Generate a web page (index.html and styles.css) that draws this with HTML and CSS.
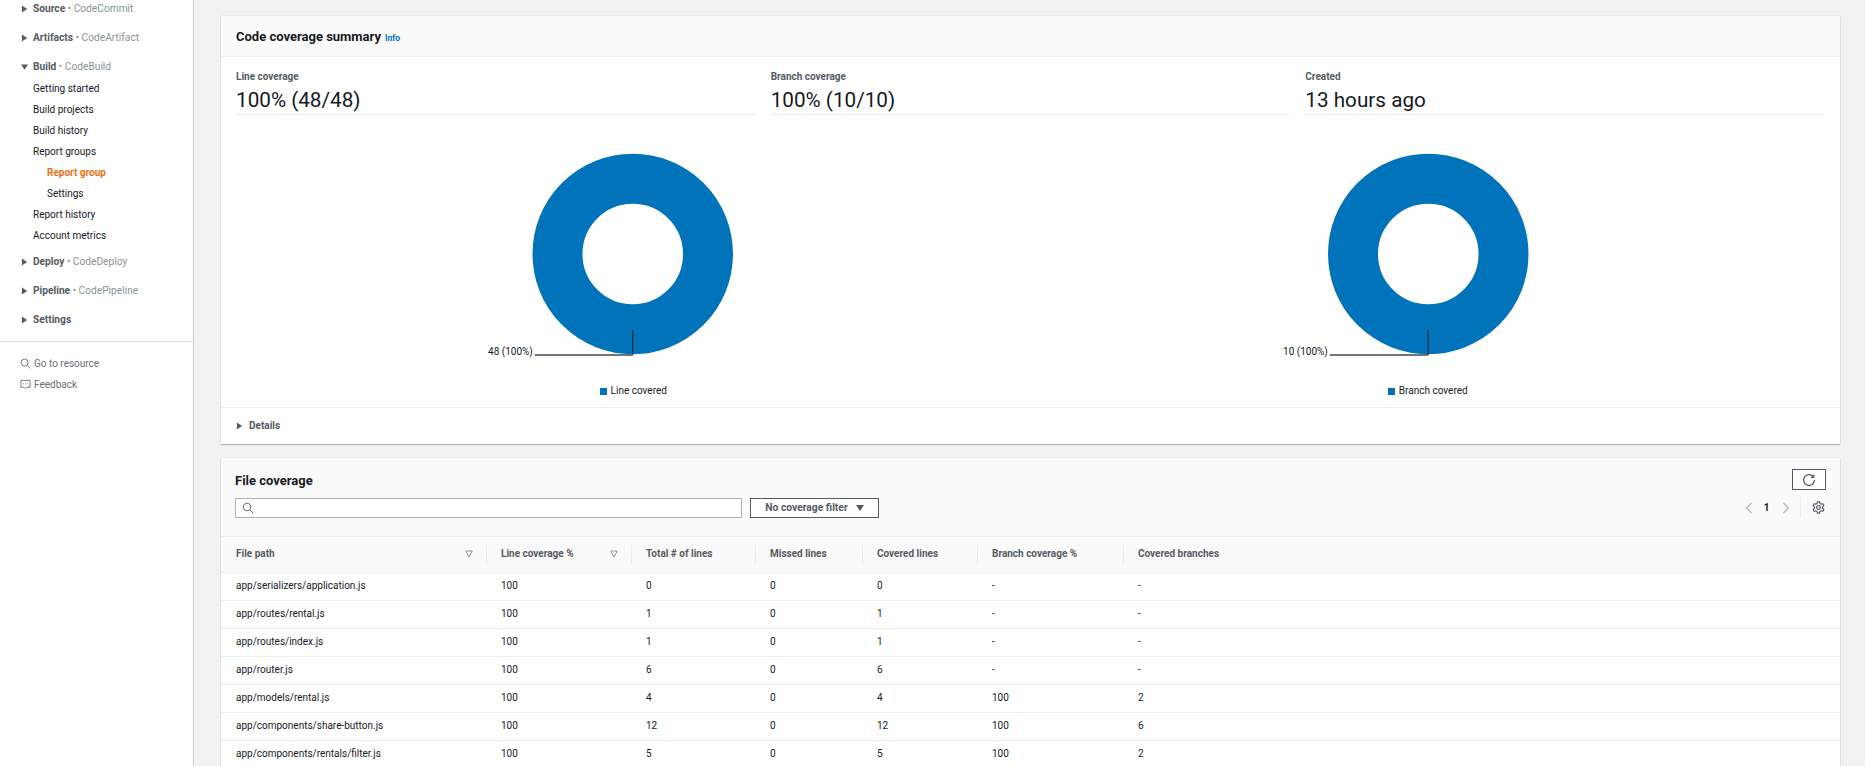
FILE: index.html
```html
<!DOCTYPE html>
<html lang="en">
<head>
<meta charset="utf-8">
<title>Code coverage</title>
<link rel="stylesheet" href="styles.css">
</head>
<body>
<div class="app">
  <nav class="sidebar">
    <div class="sec"><svg class="tri" viewBox="0 0 8 8"><path d="M1 0l6 4-6 4z"/></svg><b>Source</b><span class="svc"> • CodeCommit</span></div>
    <div class="sec"><svg class="tri" viewBox="0 0 8 8"><path d="M1 0l6 4-6 4z"/></svg><b>Artifacts</b><span class="svc"> • CodeArtifact</span></div>
    <div class="sec"><svg class="tri" viewBox="0 0 8 8"><path d="M0 1h8L4 7z"/></svg><b>Build</b><span class="svc"> • CodeBuild</span></div>
    <ul class="nav">
      <li>Getting started</li>
      <li>Build projects</li>
      <li>Build history</li>
      <li>Report groups</li>
      <li class="sub active">Report group</li>
      <li class="sub">Settings</li>
      <li>Report history</li>
      <li>Account metrics</li>
    </ul>
    <div class="sec"><svg class="tri" viewBox="0 0 8 8"><path d="M1 0l6 4-6 4z"/></svg><b>Deploy</b><span class="svc"> • CodeDeploy</span></div>
    <div class="sec"><svg class="tri" viewBox="0 0 8 8"><path d="M1 0l6 4-6 4z"/></svg><b>Pipeline</b><span class="svc"> • CodePipeline</span></div>
    <div class="sec"><svg class="tri" viewBox="0 0 8 8"><path d="M1 0l6 4-6 4z"/></svg><b>Settings</b></div>
    <hr class="rule">
    <ul class="tools">
      <li><svg class="ti" viewBox="0 0 12 12"><circle cx="5" cy="5" r="3.800"/><path d="M8 8l3.400 3.400"/></svg>Go to resource</li>
      <li><svg class="ti" viewBox="0 0 12 12"><path d="M1 1.500h10v7.500H7.500L6 10.500 4.500 9H1z"/><path d="M3.500 5.200h.8M5.600 5.200h.8M7.700 5.200h.8"/></svg>Feedback</li>
    </ul>
  </nav>
  <main class="main">
    <section class="panel summary">
      <header class="phead"><h2>Code coverage summary</h2><a class="info">Info</a></header>
      <div class="kvs">
        <div class="kv"><div class="k">Line coverage</div><div class="v">100% (48/48)</div></div>
        <div class="kv"><div class="k">Branch coverage</div><div class="v">100% (10/10)</div></div>
        <div class="kv"><div class="k">Created</div><div class="v">13 hours ago</div></div>
      </div>
      <div class="charts">
        <figure class="chart">
          <svg class="donut" viewBox="0 0 795 258">
            <circle class="ring" cx="397" cy="139" r="75.300"/>
            <path class="lead-v" d="M397 215V240"/>
            <path class="lead-h" d="M397 240H299"/>
            <text class="lbl" x="297" y="240" text-anchor="end">48 (100%)</text>
          </svg>
          <figcaption class="legend"><i class="sw"></i>Line covered</figcaption>
        </figure>
        <figure class="chart">
          <svg class="donut" viewBox="0 0 795 258">
            <circle class="ring" cx="397.500" cy="139" r="75.300"/>
            <path class="lead-v" d="M397.500 215V240"/>
            <path class="lead-h" d="M397.500 240H299"/>
            <text class="lbl" x="297" y="240" text-anchor="end">10 (100%)</text>
          </svg>
          <figcaption class="legend"><i class="sw"></i>Branch covered</figcaption>
        </figure>
      </div>
      <div class="details"><svg class="tri" viewBox="0 0 8 8"><path d="M1 0l6 4-6 4z"/></svg>Details</div>
    </section>
    <section class="panel files">
      <header class="fhead">
        <div class="ftop">
          <h2>File coverage</h2>
          <button class="refresh" aria-label="Refresh"><svg viewBox="0 0 14 14"><path d="M11.600 4.200A5.400 5.400 0 1 0 12.400 7"/><path class="fillp" d="M12.400 1v4H8.400z"/></svg></button>
        </div>
        <div class="fbar">
          <label class="search"><svg viewBox="0 0 12 12"><circle cx="5" cy="5" r="3.800"/><path d="M8 8l3.400 3.400"/></svg></label>
          <button class="filter">No coverage filter<svg viewBox="0 0 8 8"><path d="M0 1h8L4 7z"/></svg></button>
          <div class="pager">
            <svg class="chev" viewBox="0 0 8 12"><path d="M6.500 1L1.500 6l5 5"/></svg>
            <span class="pg">1</span>
            <svg class="chev" viewBox="0 0 8 12"><path d="M1.500 1l5 5-5 5"/></svg>
            <span class="vsep"></span>
            <svg class="gear" viewBox="0 0 14 14"><path d="M5.800 1h2.400l.4 1.800 1.200.7 1.800-.6 1.200 2.100-1.400 1.200v1.600l1.400 1.200-1.200 2.100-1.800-.6-1.200.7-.4 1.800H5.800l-.4-1.800-1.200-.7-1.800.6-1.200-2.100 1.400-1.200V6.200L1.200 5l1.200-2.100 1.800.6 1.200-.7z"/><circle cx="7" cy="7" r="2"/></svg>
          </div>
        </div>
      </header>
      <table class="tbl">
        <colgroup><col class="c1"><col class="c2"><col class="c3"><col class="c4"><col class="c5"><col class="c6"><col></colgroup>
        <thead>
          <tr>
            <th>File path<svg class="sort" viewBox="0 0 8 8"><path d="M.8 1h6.400L4 7z"/></svg></th>
            <th>Line coverage %<svg class="sort" viewBox="0 0 8 8"><path d="M.8 1h6.400L4 7z"/></svg></th>
            <th>Total # of lines</th>
            <th>Missed lines</th>
            <th>Covered lines</th>
            <th>Branch coverage %</th>
            <th>Covered branches</th>
          </tr>
        </thead>
        <tbody>
          <tr><td>app/serializers/application.js</td><td>100</td><td>0</td><td>0</td><td>0</td><td>-</td><td>-</td></tr>
          <tr><td>app/routes/rental.js</td><td>100</td><td>1</td><td>0</td><td>1</td><td>-</td><td>-</td></tr>
          <tr><td>app/routes/index.js</td><td>100</td><td>1</td><td>0</td><td>1</td><td>-</td><td>-</td></tr>
          <tr><td>app/router.js</td><td>100</td><td>6</td><td>0</td><td>6</td><td>-</td><td>-</td></tr>
          <tr><td>app/models/rental.js</td><td>100</td><td>4</td><td>0</td><td>4</td><td>100</td><td>2</td></tr>
          <tr><td>app/components/share-button.js</td><td>100</td><td>12</td><td>0</td><td>12</td><td>100</td><td>6</td></tr>
          <tr><td>app/components/rentals/filter.js</td><td>100</td><td>5</td><td>0</td><td>5</td><td>100</td><td>2</td></tr>
        </tbody>
      </table>
    </section>
  </main>
</div>
</body>
</html>
```

FILE: styles.css
```css
* { box-sizing: border-box; }
html, body { margin: 0; height: 766px; overflow: hidden; }
body { background: #f2f2f2; color: #16191f; font: 10px/16px Roboto, "Liberation Sans", sans-serif; }
h2 { margin: 0; font-size: 13px; font-weight: 700; line-height: 20px; }
ul { list-style: none; margin: 0; padding: 0; }
.app { display: flex; height: 766px; }

.sidebar { flex: 0 0 194px; padding-top: 1px; background: #fff; border-right: 1px solid #c9cccc; }
.sec { display: flex; align-items: center; height: 16px; margin-bottom: 13px; padding-left: 21px; white-space: pre; color: #545b64; font-size: 10.200px; }
.sec b { font-weight: 700; }
.svc { color: #879596; }
.tri { width: 7px; height: 8px; margin-right: 5px; fill: #545b64; flex: none; }
.nav { margin: -10px 0 8px; padding-left: 33px; font-size: 10px; }
.nav li { height: 21px; line-height: 21px; }
.nav .sub { padding-left: 14px; }
.nav .active { color: #ec7211; font-weight: 700; }
.rule { margin: 1px 0 0; border: 0; border-top: 1px solid #d5dbdb; }
.tools { padding: 11px 0 0 20px; color: #687078; font-size: 10px; }
.tools li { display: flex; align-items: center; height: 21px; }
.ti { width: 11px; height: 11px; margin-right: 3px; fill: none; stroke: #687078; stroke-width: 1; }

.main { flex: 1; padding: 16px 25px 0 27px; min-width: 0; }
.panel { background: #fff; box-shadow: 0 1px 1px rgba(0, 28, 36, .25), 0 0 1px rgba(0, 28, 36, .2); }
.summary { height: 428px; margin-bottom: 14px; display: flex; flex-direction: column; }
.phead { display: flex; align-items: baseline; gap: 4px; height: 41px; padding: 11px 15px 0; background: #fafafa; border-bottom: 1px solid #eaeded; }
.info { color: #0073bb; font-size: 8.500px; font-weight: 700; }
.kvs { display: grid; grid-template-columns: repeat(3, 1fr); gap: 15px; padding: 12px 15px 0; }
.kv { height: 46px; border-bottom: 1px solid #eaeded; }
.k { color: #545b64; font-size: 10px; font-weight: 700; line-height: 16px; }
.v { font-size: 20.700px; line-height: 28px; margin-top: 1px; }
.charts { display: grid; grid-template-columns: 1fr 1fr; padding: 0 15px; height: 293px; border-bottom: 1px solid #eaeded; }
.chart { margin: 0; min-width: 0; }
.donut { display: block; width: 100%; height: 258px; }
.ring { fill: none; stroke: #0073bb; stroke-width: 50; }
.lead-v { fill: none; stroke: #16191f; stroke-width: 1; }
.lead-h { fill: none; stroke: #414750; stroke-width: 1.500; }
.lbl { font-size: 10px; fill: #16191f; }
.legend { display: flex; justify-content: center; align-items: center; gap: 4px; margin-top: 10px; font-size: 10px; }
.sw { width: 7px; height: 7px; background: #0073bb; }
.details { display: flex; align-items: center; height: 36px; padding-left: 15px; color: #545b64; font-size: 10px; font-weight: 700; }
.details .tri { margin-right: 6px; }

.files { background: #fafafa; min-height: 320px; }
.fhead { height: 79px; padding: 11px 14px 0 14px; border-bottom: 1px solid #eaeded; position: relative; }
.ftop { display: flex; justify-content: space-between; align-items: flex-start; height: 28px; }
.ftop h2 { margin-top: 2px; font-size: 13px; }
.refresh { width: 34px; height: 21px; padding: 0; background: #fff; border: 1px solid #545b64; display: flex; align-items: center; justify-content: center; }
.refresh svg { width: 14px; height: 14px; fill: none; stroke: #545b64; stroke-width: 1.200; }
.refresh .fillp { fill: #545b64; stroke: none; }
.fbar { display: flex; align-items: center; height: 21px; }
.search { display: flex; align-items: center; width: 507px; height: 20px; margin-right: 8px; padding-left: 6px; background: #fff; border: 1px solid #aab7b8; }
.search svg { width: 12px; height: 12px; fill: none; stroke: #687078; stroke-width: 1; }
.filter { display: flex; align-items: center; justify-content: center; gap: 8px; width: 129px; height: 20px; padding: 0; background: #fff; border: 1px solid #545b64; color: #545b64; font: 700 10.300px/16px Roboto, sans-serif; }
.filter svg { width: 8px; height: 8px; fill: #545b64; }
.pager { display: flex; align-items: center; margin-left: auto; margin-right: 1px; }
.chev { width: 8px; height: 12px; fill: none; stroke: #aab7b8; stroke-width: 1.200; }
.pg { width: 13px; margin: 0 9px 0 7px; text-align: center; font-weight: 700; font-size: 10px; }
.vsep { width: 1px; height: 21px; margin: 0 11px 0 10px; background: #eaeded; }
.gear { width: 13px; height: 13px; fill: none; stroke: #545b64; stroke-width: 1.200; }

.tbl { width: 100%; table-layout: fixed; border-collapse: collapse; }
.c1 { width: 266px; } .c2 { width: 145px; } .c3 { width: 124px; } .c4 { width: 107px; } .c5 { width: 115px; } .c6 { width: 146px; }
.tbl th { position: relative; height: 35px; padding: 0 14px; text-align: left; color: #545b64; font-size: 10px; font-weight: 700; background: #fafafa; border-bottom: 1px solid #eaeded; white-space: nowrap; }
.tbl th:first-child, .tbl td:first-child { padding-left: 15px; }
.tbl th:not(:last-child)::after { content: ""; position: absolute; right: 0; top: 8px; bottom: 8px; width: 1px; background: #eaeded; }
.sort { position: absolute; right: 14px; top: 13px; width: 8px; height: 8px; fill: none; stroke: #879596; stroke-width: 1; }
.tbl td { height: 28px; padding: 0 14px; background: #fff; font-size: 10px; border-bottom: 1px solid #eaeded; white-space: nowrap; }
```
